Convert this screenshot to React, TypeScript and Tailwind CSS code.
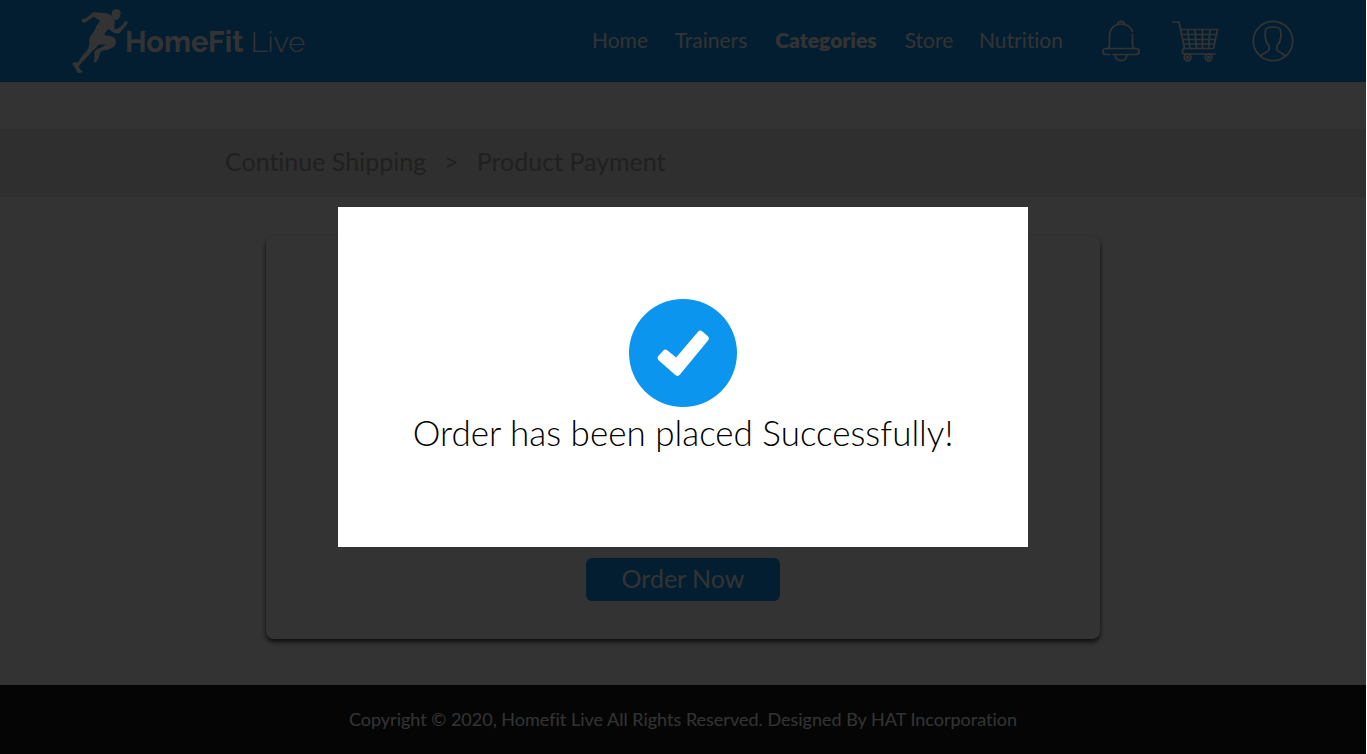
import React from "react";

const navLinks = [
  { label: "Home", width: "w-[56px]", active: false },
  { label: "Trainers", width: "w-[72px]", active: false },
  { label: "Categories", width: "w-[104px]", active: true },
  { label: "Store", width: "w-[48px]", active: false },
  { label: "Nutrition", width: "w-[82px]", active: false },
];

function Runner() {
  return (
    <svg viewBox="36 24 168 198" className="h-[66px] w-[56px] shrink-0" fill="currentColor" aria-hidden="true">
      <path d="M155 38C157 30 163 27 171 28C179 28 183 33 182 40C181 49 178 57 170 60C163 60 158 56 157 51C155 47 154 43 155 38Z" />
      <path d="M66 57C70 55 74 55 77 56L99 37C110 37 125 39 137 40C146 41 153 45 157 52L164 62C165 70 162 78 163 86L172 87L189 74C190 66 196 62 202 64C204 69 201 75 196 79L178 100C169 102 158 98 153 93L146 86C139 92 135 98 133 106C145 107 158 108 165 116C170 122 168 132 164 138C155 147 139 150 127 152C119 158 118 164 117 171L109 187C104 188 100 184 102 179C105 170 103 162 103 155L111 148C120 144 131 140 138 133C131 134 121 134 116 134C110 143 100 148 92 158C85 168 74 178 63 190L57 198C56 205 60 209 67 212C67 218 60 220 52 218C49 208 43 200 37 192C39 187 43 185 48 188L55 186C62 174 69 163 79 154C86 146 88 138 88 130C86 119 88 109 96 102C103 94 107 86 109 78L120 62C114 57 106 54 101 50L82 63C77 68 71 70 67 66C65 63 65 60 66 57Z" />
    </svg>
  );
}

function BellIcon() {
  return (
    <svg viewBox="0 0 38 42" className="h-[42px] w-[38px]" fill="none" stroke="currentColor" strokeWidth="1.7" strokeLinecap="round" aria-hidden="true">
      <path d="M15.5 4.5C15.5 .2 22.5 .2 22.5 4.5" />
      <path d="M30.5 11.5C28.5 6.5 24 4 19 4C12 4 7.5 9 7.5 16V23C7.5 27 7 29 5.5 28.5M30.5 14.5V23C30.5 27 31 28.5 32.5 28.5" />
      <path d="M8 34.5H4C-.2 34.5-.2 28.5 4 28.5H34C38.2 28.5 38.2 34.5 34 34.5H11" />
      <path d="M13 35C14 42.5 24 42.5 25 35" />
    </svg>
  );
}

function CartIcon() {
  return (
    <svg viewBox="0 0 48 42" className="h-[42px] w-[48px]" fill="none" stroke="currentColor" strokeWidth="1.7" strokeLinejoin="round" strokeLinecap="round" aria-hidden="true">
      <path d="M1 2H7L12.5 28.5M8.5 9.5H45.5L41.5 28.5H13C9.5 29 9.5 34 13 34H43" />
      <path d="M10 14.5H44.5M11 19.5H43.5M12 24H42.5M15.5 9.5L18 28.5M23 9.5L24.5 28.5M30.5 9.5V28.5M38 9.5L36.5 28.5" />
      <circle cx="15.5" cy="37.5" r="3.3" />
      <circle cx="15.5" cy="37.5" r=".8" />
      <circle cx="36.5" cy="37.5" r="3.3" />
      <circle cx="36.5" cy="37.5" r=".8" />
    </svg>
  );
}

function UserIcon() {
  return (
    <svg viewBox="0 0 42 42" className="h-[42px] w-[42px]" fill="none" stroke="currentColor" strokeWidth="1.7" strokeLinecap="round" strokeLinejoin="round" aria-hidden="true">
      <circle cx="21" cy="21" r="19.7" />
      <path d="M8.5 36C11 33 14 33 16.5 30.5C17.5 28 17.5 26 16.5 25C14 22.5 13.5 20 13.5 18C12.5 15 13.5 12 13.5 10C15 6 27 6 28.5 10C28.5 13 29.5 15 28.5 18C28.5 20 28 22.5 25.5 25C24.5 26 24.5 28 25.5 30.5C28 33 31 33 33.5 36" />
    </svg>
  );
}

export default function App() {
  return (
    <div className="relative mr-px flex min-h-screen flex-col bg-white font-['Lato','Open_Sans',sans-serif] [font-variant-ligatures:none]">
      <header className="flex h-[82px] items-center bg-[#0c95ee] px-[72px] text-white">
        <a href="#home" aria-label="HomeFit Live" className="flex items-center">
          <Runner />
          <span className="-ml-[3px] pt-px text-[29px] leading-8 whitespace-nowrap font-['Raleway','Lato',sans-serif]">
            <span className="font-bold">HomeFit</span> <span className="font-light">Live</span>
          </span>
        </a>
        <nav className="ml-auto flex items-center gap-[27px] pb-[2px] text-[21px] leading-8">
          {navLinks.map((link) => (
            <a
              key={link.label}
              href={"#" + link.label.toLowerCase()}
              className={link.width + " flex justify-center whitespace-nowrap " + (link.active ? "font-extrabold" : "font-normal")}
            >
              {link.label}
            </a>
          ))}
        </nav>
        <div className="ml-10 flex items-center gap-8">
          <button type="button" aria-label="Notifications"><BellIcon /></button>
          <button type="button" aria-label="Cart"><CartIcon /></button>
          <button type="button" aria-label="Account"><UserIcon /></button>
        </div>
      </header>

      <div className="mt-[47px] flex h-[68px] items-center gap-[18px] bg-[#e8e8e8] pb-1 pl-[225px] text-[25px] leading-8 text-[#a0a0a0]">
        <a href="#shipping">Continue Shipping</a>
        <span>&gt;</span>
        <a href="#payment">Product Payment</a>
      </div>

      <main className="flex grow justify-center pt-[39px] pb-[46px]">
        <section className="flex w-[61%] flex-col items-center justify-end rounded-lg bg-white pb-[38px] shadow-[0_3px_5px_rgba(0,0,0,0.75)]">
          <button type="button" className="h-[43px] w-[194px] rounded-md bg-[#0c95ee] pb-1 text-[25px] leading-8 font-normal text-white">
            Order Now
          </button>
        </section>
      </main>

      <footer className="flex h-[69px] items-center justify-center bg-[#191919] pb-[2px] text-[18px] leading-6 font-normal text-white">
        Copyright © 2020, Homefit Live All Rights Reserved. Designed By HAT Incorporation
      </footer>

      <div className="absolute inset-0 flex items-center justify-center bg-black/80">
        <div role="dialog" aria-label="Order status" className="flex h-[340px] w-[690px] flex-col items-center bg-white pt-[92px]">
          <svg viewBox="0 0 108 108" className="h-[108px] w-[108px]" aria-hidden="true">
            <circle cx="54" cy="54" r="54" fill="#0c95ee" />
            <path d="M71.3 35L76.5 39.5L48.5 73.5L32 59L36.5 54L47.5 63Z" fill="white" stroke="white" strokeWidth="6.5" strokeLinejoin="round" />
          </svg>
          <p className="mt-1 text-[35px] leading-[42px] font-light text-black">Order has been placed Successfully!</p>
        </div>
      </div>
    </div>
  );
}
